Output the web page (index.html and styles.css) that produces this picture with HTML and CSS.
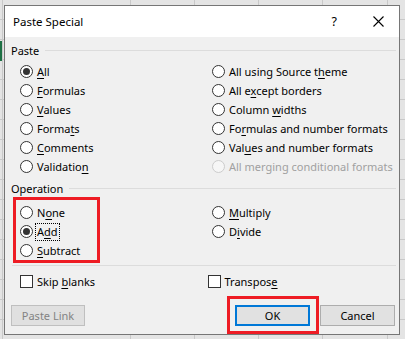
FILE: index.html
```html
<!DOCTYPE html>
<html>
<head>
<meta charset="utf-8">
<link rel="stylesheet" href="styles.css">
</head>
<body>
<div class="sheet">
  <div class="dialog">
    <div class="titlebar">
      <span class="title">Paste Special</span>
      <span class="help">?</span>
      <svg class="close" width="11" height="11" viewBox="0 0 11 11"><path d="M0.5 0.5 L10.5 10.5 M10.5 0.5 L0.5 10.5" stroke="#000" stroke-width="1.1" fill="none"/></svg>
    </div>
    <div class="content">
      <div class="group-head"><span>Paste</span><i class="rule"></i></div>
      <div class="options">
        <div class="opt"><span class="radio on"></span><span><u>A</u>ll</span></div>
        <div class="opt"><span class="radio"></span><span>All using Source t<u>h</u>eme</span></div>
        <div class="opt"><span class="radio"></span><span><u>F</u>ormulas</span></div>
        <div class="opt"><span class="radio"></span><span>All e<u>x</u>cept borders</span></div>
        <div class="opt"><span class="radio"></span><span><u>V</u>alues</span></div>
        <div class="opt"><span class="radio"></span><span>Column <u>w</u>idths</span></div>
        <div class="opt"><span class="radio"></span><span>Forma<u>t</u>s</span></div>
        <div class="opt"><span class="radio"></span><span>Fo<u>r</u>mulas and number formats</span></div>
        <div class="opt"><span class="radio"></span><span><u>C</u>omments</span></div>
        <div class="opt"><span class="radio"></span><span>Val<u>u</u>es and number formats</span></div>
        <div class="opt"><span class="radio"></span><span>Validatio<u>n</u></span></div>
        <div class="opt disabled"><span class="radio"></span><span>All merging conditional formats</span></div>
      </div>
      <div class="group-head op-head"><span>Operation</span><i class="rule"></i></div>
      <div class="operations">
        <div class="highlight">
          <div class="opt"><span class="radio"></span><span>N<u>o</u>ne</span></div>
          <div class="opt"><span class="radio on"></span><span class="focus">A<u>d</u>d</span></div>
          <div class="opt"><span class="radio"></span><span><u>S</u>ubtract</span></div>
        </div>
        <div class="opcol">
          <div class="opt"><span class="radio"></span><span><u>M</u>ultiply</span></div>
          <div class="opt"><span class="radio"></span><span>D<u>i</u>vide</span></div>
        </div>
      </div>
      <div class="sep"></div>
      <div class="checks">
        <div class="chk"><span class="box"></span><span>Skip <u>b</u>lanks</span></div>
        <div class="chk right"><span class="box"></span><span>Transpos<u>e</u></span></div>
      </div>
      <div class="buttons">
        <button class="btn link" disabled>Paste Link</button>
        <div class="ok-mark"><button class="btn ok">OK</button></div>
        <button class="btn cancel">Cancel</button>
      </div>
    </div>
  </div>
</div>
</body>
</html>
```

FILE: styles.css
```css
html, body {
  margin: 0;
  padding: 0;
}
body {
  width: 405px;
  height: 339px;
  overflow: hidden;
  font-family: "Noto Sans", "Open Sans", sans-serif;
  font-size: 11px;
  color: #000;
}
.sheet {
  width: 405px;
  height: 339px;
  padding-top: 5px;
  padding-left: 4px;
  box-sizing: border-box;
  background-color: #e4e4e4;
  background-image:
    linear-gradient(#1e7145, #1e7145),
    linear-gradient(#c9c9c9, #c9c9c9),
    linear-gradient(#c9c9c9, #c9c9c9),
    linear-gradient(#c9c9c9, #c9c9c9),
    linear-gradient(#c9c9c9, #c9c9c9),
    linear-gradient(#c9c9c9, #c9c9c9),
    linear-gradient(#c9c9c9, #c9c9c9),
    repeating-linear-gradient(to bottom, transparent 0 19px, #c9c9c9 19px 20px);
  background-size: 2px 20px, 1px 100%, 1px 100%, 1px 100%, 1px 100%, 1px 100%, 1px 100%, 100% 100%;
  background-position: 0 41px, 2px 0, 130px 0, 194px 0, 258px 0, 322px 0, 387px 0, 0 0;
  background-repeat: no-repeat;
}
.dialog {
  width: 396px;
  height: 330px;
  box-sizing: border-box;
  border: 1px solid #767676;
  background: #f0f0f0;
  display: flex;
  flex-direction: column;
}
.titlebar {
  height: 31px;
  flex: none;
  background: #fff;
  display: flex;
  align-items: center;
  padding-left: 8px;
}
.title {
  flex: 1;
  font-size: 11.5px;
  padding-bottom: 1px;
}
.help {
  margin-right: 36px;
  font-size: 12.5px;
  padding-bottom: 1px;
}
.close {
  margin-right: 15px;
  margin-top: -1px;
}
.content {
  flex: 1;
  padding: 6px 4px 0 6px;
}
.group-head {
  height: 16px;
  line-height: 16px;
  display: flex;
  align-items: center;
}
.rule {
  flex: 1;
  height: 1px;
  background: #dcdcdc;
  margin-left: 6px;
  margin-right: -1px;
  margin-top: -1px;
}
.options {
  margin-top: 3px;
  margin-left: 9px;
  display: grid;
  grid-template-columns: 192px 1fr;
  grid-auto-rows: 19px;
}
.opt {
  display: flex;
  align-items: center;
  height: 19px;
  white-space: nowrap;
}
.radio {
  width: 13px;
  height: 13px;
  box-sizing: border-box;
  border: 1px solid #333;
  border-radius: 50%;
  background: #fff;
  margin-right: 4px;
  flex: none;
  display: flex;
  align-items: center;
  justify-content: center;
}
.radio.on::after {
  content: "";
  width: 7px;
  height: 7px;
  border-radius: 50%;
  background: #333;
}
.disabled {
  color: #a0a0a0;
}
.disabled .radio {
  border-color: #cccccc;
  background: #f6f6f6;
}
.op-head {
  margin-top: 5px;
}
.operations {
  display: flex;
  align-items: flex-start;
}
.highlight {
  margin-left: 2px;
  width: 87px;
  height: 66px;
  box-sizing: border-box;
  border: 3px solid #ee1c24;
  padding: 3px 0 0 4px;
}
.opcol {
  margin-left: 112px;
  padding-top: 6px;
}
.focus {
  line-height: 14px;
  outline: 1px dotted #000;
  outline-offset: 1px;
}
.sep {
  height: 1px;
  background: #dcdcdc;
  margin: 2px -1px 0 1px;
}
.checks {
  margin-top: 9px;
  margin-left: 9px;
  display: flex;
  height: 13px;
}
.chk {
  display: flex;
  align-items: center;
  width: 192px;
  white-space: nowrap;
}
.box {
  width: 13px;
  height: 13px;
  box-sizing: border-box;
  border: 1px solid #333;
  background: #fff;
  margin-right: 4px;
  flex: none;
}
.buttons {
  margin-top: 8px;
  display: flex;
  align-items: flex-start;
}
.btn {
  font-family: inherit;
  font-size: 11px;
  height: 21px;
  box-sizing: border-box;
  background: #e1e1e1;
  border: 1px solid #adadad;
  color: #000;
  padding: 0;
  margin: 0;
}
.link {
  margin-top: 9px;
  width: 74px;
  color: #838383;
  background: #e0e0e0;
  border-color: #bfbfbf;
}
.ok-mark {
  margin-left: auto;
  width: 92px;
  height: 38px;
  box-sizing: border-box;
  border: 3px solid #ee1c24;
  padding: 6px 0 0 5px;
}
.ok {
  width: 75px;
  border: 2px solid #0078d7;
}
.cancel {
  margin-top: 9px;
  margin-left: 1px;
  width: 75px;
}
u {
  text-decoration-thickness: 1px;
  text-underline-offset: 2px;
}
```
